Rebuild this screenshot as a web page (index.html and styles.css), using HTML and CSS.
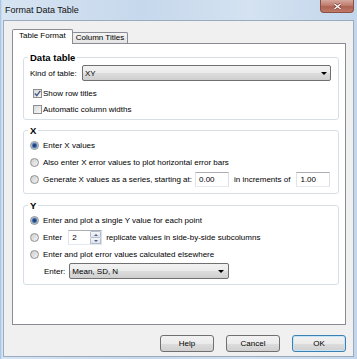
FILE: index.html
```html
<!DOCTYPE html>
<html lang="en">
<head>
    <meta charset="UTF-8">
    <meta name="viewport" content="width=device-width, initial-scale=1.0">
    <title>Format Data Table</title>
    <link rel="stylesheet" href="styles.css">
</head>
<body>
    <div class="window">
        <div class="titlebar">
            <span class="title">Format Data Table</span>
            <span class="close">
                <svg width="9" height="7" viewBox="0 0 9 7">
                    <path d="M1.5 1 L7.5 6 M7.5 1 L1.5 6" stroke="#6b3a30" stroke-width="2.6"/>
                    <path d="M1.5 1 L7.5 6 M7.5 1 L1.5 6" stroke="#fff" stroke-width="1.4"/>
                </svg>
            </span>
        </div>

        <div class="client">
            <div class="tabs">
                <div class="tab active">Table Format</div>
                <div class="tab">Column Titles</div>
            </div>

            <div class="panel">
                <fieldset class="group group-data">
                    <legend>Data table</legend>
                    <div class="row kind">
                        <span class="label">Kind of table:</span>
                        <div class="combo"><span>XY</span><i class="arrow"></i></div>
                    </div>
                    <div class="row check first">
                        <span class="box">
                            <svg width="7" height="7" viewBox="0 0 7 7"><path d="M0.8 3.4 L2.8 5.6 L6.3 0.9" fill="none" stroke="#4a5f8c" stroke-width="1.5"/></svg>
                        </span>
                        Show row titles
                    </div>
                    <div class="row check">
                        <span class="box"></span>
                        Automatic column widths
                    </div>
                </fieldset>

                <fieldset class="group group-x">
                    <legend>X</legend>
                    <div class="row"><span class="radio on"></span>Enter X values</div>
                    <div class="row"><span class="radio"></span>Also enter X error values to plot horizontal error bars</div>
                    <div class="row">
                        <span class="radio"></span>Generate X values as a series, starting at:
                        <span class="num start">0.00</span>
                        <span>in increments of</span>
                        <span class="num step">1.00</span>
                    </div>
                </fieldset>

                <fieldset class="group group-y">
                    <legend>Y</legend>
                    <div class="row"><span class="radio on"></span>Enter and plot a single Y value for each point</div>
                    <div class="row">
                        <span class="radio"></span>Enter
                        <div class="spin">
                            <span class="spin-value">2</span>
                            <span class="spin-buttons">
                                <span class="spin-btn"><i class="tri up"></i></span>
                                <span class="spin-btn"><i class="tri down"></i></span>
                            </span>
                        </div>
                        replicate values in side-by-side subcolumns
                    </div>
                    <div class="row"><span class="radio"></span>Enter and plot error values calculated elsewhere</div>
                    <div class="row enter">
                        <span>Enter:</span>
                        <div class="combo small"><span>Mean, SD, N</span><i class="arrow"></i></div>
                    </div>
                </fieldset>
            </div>

            <div class="buttons">
                <button type="button">Help</button>
                <button type="button">Cancel</button>
                <button type="button" class="default">OK</button>
            </div>
        </div>
    </div>
</body>
</html>
```

FILE: styles.css
```css
* {
    box-sizing: border-box;
}
body {
    margin: 0;
    font-family: "Liberation Sans", Arial, sans-serif;
    font-size: 8px;
    color: #000;
    background: #c9daec;
}
.window {
    width: 357px;
    height: 359px;
    padding: 0 3px 2px 3px;
    display: flex;
    flex-direction: column;
    background: linear-gradient(to right, #9dbde2 0, #d7e4f2 2px, #c6d8ec 40%, #d4e2f1 70%, #c3d6eb 100%);
}
.titlebar {
    height: 20px;
    display: flex;
    align-items: flex-start;
}
.title {
    font-size: 9px;
    line-height: 10px;
    padding: 5px 0 0 2px;
    color: #111;
}
.close {
    margin-left: auto;
    width: 34px;
    height: 13px;
    display: flex;
    align-items: center;
    justify-content: center;
    border: 1px solid #8a4f45;
    border-top: none;
    border-radius: 0 0 4px 4px;
    background: linear-gradient(#d6a89e, #c07c6e 45%, #ad6352 55%, #c07868);
}

.client {
    flex: 1;
    background: #f0f0f0;
    border: 1px solid #9aabbf;
    padding: 8px 7px 0 8px;
    display: flex;
    flex-direction: column;
}

/* tabs */
.tabs {
    display: flex;
    align-items: flex-end;
    height: 14px;
    position: relative;
    z-index: 1;
}
.tab {
    height: 11px;
    margin-left: -1px;
    padding: 0 3px;
    line-height: 10px;
    white-space: nowrap;
    border: 1px solid #898c95;
    border-bottom: none;
    border-radius: 2px 2px 0 0;
    background: linear-gradient(#f4f4f4, #e4e4e4);
}
.tab.active {
    height: 15px;
    margin: 0 0 -1px 0;
    padding: 0 6px;
    line-height: 12px;
    background: #fff;
}
.panel {
    height: 282px;
    background: #fff;
    border: 1px solid #898c95;
    padding: 7px 6px 0 10px;
}

/* group boxes */
.group {
    margin: 0;
    border: 1px solid #d5dfe5;
    border-radius: 3px;
    padding: 0 7px 5px 6px;
    min-width: 0;
}
.group legend {
    font-weight: bold;
    font-size: 9.5px;
    line-height: 13px;
    padding: 0 2px;
    margin-left: -2px;
}
.group-data {
    padding-top: 1px;
    padding-bottom: 2px;
}
.group-x {
    margin-top: 4px;
}
.group-y {
    margin-top: 5px;
}
.row {
    display: flex;
    align-items: center;
    height: 17px;
    white-space: nowrap;
}
.row.kind {
    height: 16px;
}
.row.check {
    height: 16px;
}
.row.first {
    margin-top: 4px;
}
.label {
    width: 52px;
}

/* combo box */
.combo {
    flex: 1;
    height: 16px;
    display: flex;
    align-items: center;
    padding: 0 3px 0 2px;
    border: 1px solid #707070;
    border-radius: 2px;
    background: linear-gradient(#f2f2f2, #ebebeb 50%, #dddddd 51%, #cfcfcf);
}
.combo.small {
    flex: none;
    width: 160px;
    margin-left: 4px;
    padding-right: 4px;
}
.arrow {
    margin-left: auto;
    width: 0;
    height: 0;
    border-left: 3px solid transparent;
    border-right: 3px solid transparent;
    border-top: 3px solid #000;
}
.row.enter {
    height: 16px;
    padding-left: 14px;
}

/* checkbox and radio */
.box {
    width: 9px;
    height: 9px;
    margin: 0 1px 0 3px;
    display: flex;
    align-items: center;
    justify-content: center;
    border: 1px solid #8e8f8f;
    background: linear-gradient(135deg, #d8d8d8, #f7f7f7);
}
.radio {
    width: 9px;
    height: 9px;
    margin-right: 4px;
    border-radius: 50%;
    border: 1px solid #8e8f8f;
    background: linear-gradient(135deg, #cfcfcf, #f2f2f2);
}
.radio.on {
    background: radial-gradient(circle, #1d3766 0, #2b4f8a 1.5px, #7fa6d2 2.8px, #e8e8e8 3.6px);
}

/* text inputs */
.num {
    width: 34px;
    height: 15px;
    line-height: 13px;
    padding-left: 3px;
    border: 1px solid;
    border-color: #abadb3 #dbdfe6 #e3e9ef #e2e3ea;
    background: #fff;
}
.num.start {
    margin: 0 5px 0 3px;
}
.num.step {
    margin-left: 6px;
}

/* spin box */
.spin {
    width: 34px;
    height: 15px;
    margin: 0 4px 0 6px;
    display: flex;
    border: 1px solid;
    border-color: #abadb3 #dbdfe6 #e3e9ef #e2e3ea;
    background: #fff;
}
.spin-value {
    flex: 1;
    padding-left: 3px;
    line-height: 13px;
}
.spin-buttons {
    width: 11px;
    display: flex;
    flex-direction: column;
}
.spin-btn {
    flex: 1;
    display: flex;
    align-items: center;
    justify-content: center;
    border: 1px solid #b4bfcc;
    border-radius: 1px;
    background: linear-gradient(#f4f6f9, #dfe4ea);
}
.spin-btn + .spin-btn {
    border-top: none;
}
.tri {
    width: 0;
    height: 0;
    border-left: 2px solid transparent;
    border-right: 2px solid transparent;
}
.tri.up {
    border-bottom: 2px solid #4d6185;
}
.tri.down {
    border-top: 2px solid #4d6185;
}

/* dialog buttons */
.buttons {
    display: flex;
    justify-content: flex-end;
    gap: 12px;
    margin-top: 10px;
}
button {
    width: 54px;
    height: 17px;
    padding: 0;
    font-family: "Liberation Sans", Arial, sans-serif;
    font-size: 8px;
    color: #000;
    border: 1px solid #707070;
    border-radius: 3px;
    background: linear-gradient(#f2f2f2, #ebebeb 50%, #dddddd 51%, #cfcfcf);
}
button.default {
    border-color: #3c7fb1;
    box-shadow: inset 0 0 0 1px #c4e5f9;
}
```
